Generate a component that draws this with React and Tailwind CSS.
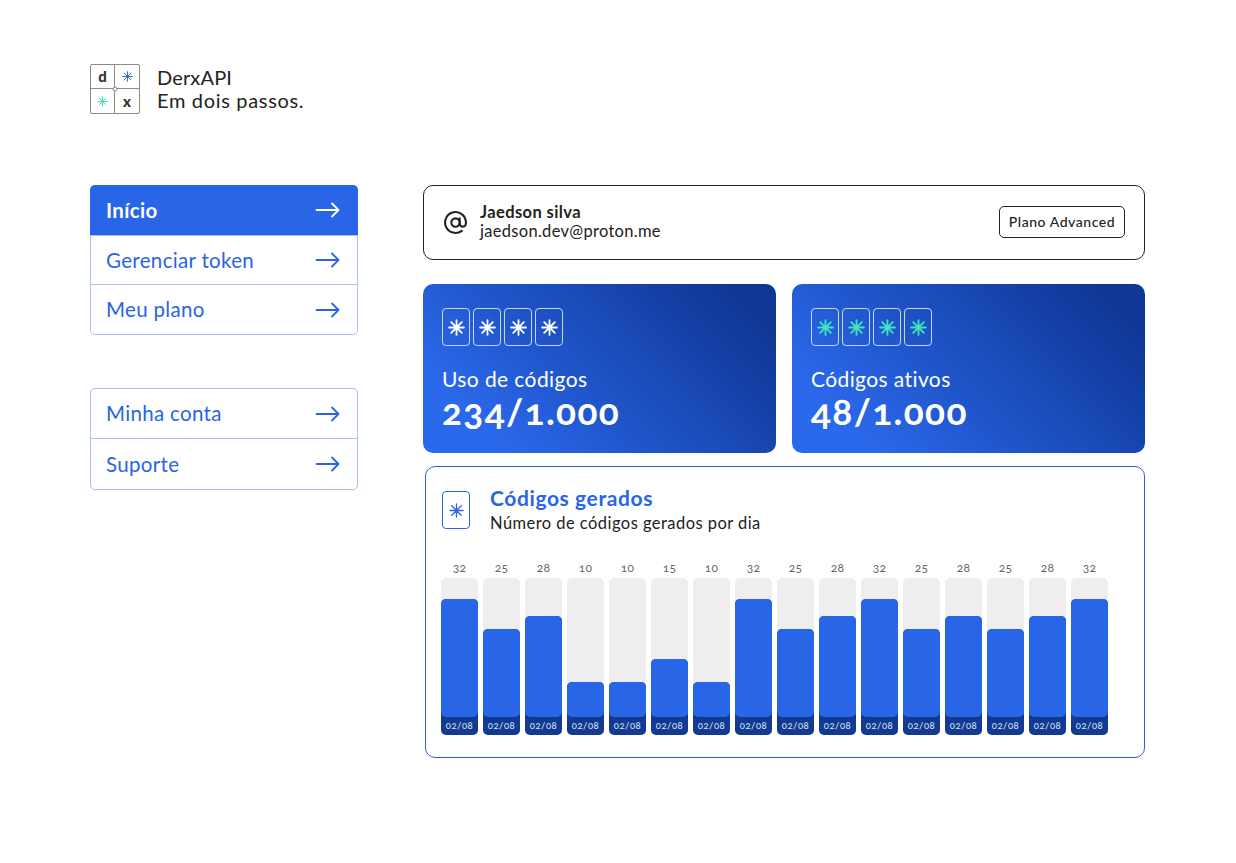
import { AtSign } from 'lucide-react'

const FONT = "font-['Lato','Noto_Sans',sans-serif]"

const MENU_TOP = [
  { name: 'Início', active: true, height: 'h-[51px]' },
  { name: 'Gerenciar token', height: 'h-[49px]' },
  { name: 'Meu plano', height: 'h-[49px]' },
]
const MENU_BOTTOM = [
  { name: 'Minha conta', height: 'h-[50px]' },
  { name: 'Suporte', height: 'h-[50px]' },
]
const BARS = [32, 25, 28, 10, 10, 15, 10, 32, 25, 28, 32, 25, 28, 25, 28, 32]
const HEIGHTS = { 32: 136, 25: 106, 28: 119, 10: 53, 15: 76 }

function Star({ size = 16, className = '', width = 1.4 }) {
  return (
    <svg width={size} height={size} viewBox="0 0 16 16" className={className} stroke="currentColor" strokeWidth={width} strokeLinecap="round">
      <path d="M8 1v14M1 8h14M3 3l10 10M13 3L3 13" />
    </svg>
  )
}

function Arrow() {
  return (
    <svg width="25" height="16" viewBox="0 0 25 16" fill="none" stroke="currentColor" strokeWidth="1.8" strokeLinecap="round" strokeLinejoin="round">
      <path d="M1.5 8h22M17 1.5L23.5 8 17 14.5" />
    </svg>
  )
}

function Logo() {
  return (
    <div className="relative grid h-[50px] w-[50px] grid-cols-2 grid-rows-2 rounded-[2px] border border-[#8a8a8a] text-[15px] font-black text-[#333]">
      <div className="flex items-center justify-center border-r border-b border-[#8a8a8a]">d</div>
      <div className="flex items-center justify-center border-b border-[#8a8a8a] text-[#2865e7]"><Star size={11} width={1.4} /></div>
      <div className="flex items-center justify-center border-r border-[#8a8a8a] text-[#3fe6bd]"><Star size={11} width={1.4} /></div>
      <div className="flex items-center justify-center">x</div>
      <div className="absolute left-1/2 top-1/2 h-[5px] w-[5px] -translate-x-1/2 -translate-y-1/2 rounded-full border border-[#8a8a8a] bg-white" />
    </div>
  )
}

function Menu({ items }) {
  return (
    <nav className="flex flex-col divide-y divide-[#a9c0ec] rounded-[5px] border border-[#a9c0ec]">
      {items.map((item) => (
        <a
          key={item.name}
          className={`flex items-center justify-between text-[20.5px] tracking-[0.33px] ${item.height} ${
            item.active
              ? '-mx-px -mt-px rounded-t-[5px] bg-[#2865e7] pl-4 pr-[18px] font-bold text-white'
              : 'bg-white pl-[15px] pr-[17px] text-[#2865e7] first:rounded-t-[5px] last:rounded-b-[5px]'
          }`}
        >
          {item.name}
          <Arrow />
        </a>
      ))}
    </nav>
  )
}

function StatCard({ title, value, starClass }) {
  return (
    <div className="flex h-[169px] flex-1 flex-col rounded-[10px] bg-linear-45 from-[#2b69ec] from-15% to-[#0f3796] to-90% px-[19px] pt-6 text-white">
      <div className="flex gap-[3px]">
        {[0, 1, 2, 3].map((i) => (
          <div key={i} className="flex h-[38px] w-[28px] items-center justify-center rounded-[4px] border border-[#c5d6f7]">
            <Star size={17} width={1.7} className={starClass} />
          </div>
        ))}
      </div>
      <p className="mt-[21px] text-[21px] leading-6 tracking-[0.4px]">{title}</p>
      <p className="text-[37px] font-bold leading-10 tracking-[1.35px] oldstyle-nums">{value}</p>
    </div>
  )
}

function Chart() {
  return (
    <section className="ml-[2px] mt-[13px] h-[292px] rounded-[10px] border border-[#2f62c4] pl-[15px] pt-[24px]">
      <div className="flex items-start">
        <div className="ml-px flex h-[38px] w-[28px] items-center justify-center rounded-[4px] border border-[#2865e7] text-[#2865e7]">
          <Star size={15} width={1.4} />
        </div>
        <div className="ml-[20px] -mt-[5px]">
          <h2 className="text-[21px] font-bold leading-6 tracking-[0.6px] text-[#2865e7]">Códigos gerados</h2>
          <p className="mt-[3px] text-[16.5px] leading-5 tracking-[0.45px] text-[#222]">Número de códigos gerados por dia</p>
        </div>
      </div>
      <div className="mt-[27px] flex gap-[5px]">
        {BARS.map((v, i) => (
          <div key={i} className="flex w-[37px] flex-col items-center">
            <span className="mb-[2px] text-[12px] leading-[16px] tracking-[0.3px] text-[#666] oldstyle-nums">{v}</span>
            <div className="flex h-[157px] w-full flex-col justify-end overflow-hidden rounded-[5px] bg-[#eeeeee]">
              <div className="flex flex-col justify-end rounded-t-[5px] bg-[#123a93]" style={{ height: HEIGHTS[v] }}>
                <div className="flex-1 rounded-[5px] bg-[#2865e7]" />
                <span className="h-[18px] text-center text-[9.5px] leading-[18px] tracking-[0.5px] text-[#dfe8fb] oldstyle-nums">02/08</span>
              </div>
            </div>
          </div>
        ))}
      </div>
    </section>
  )
}

export default function App() {
  return (
    <div className={`min-h-[863px] bg-white pl-[90px] pr-[91px] pt-[64px] text-[#222] ${FONT}`}>
      <header className="flex items-center gap-[17px]">
        <Logo />
        <div className="text-[20px] leading-[23px] text-[#222]">
          <p className="tracking-[0.15px]">DerxAPI</p>
          <p className="tracking-[0.67px]">Em dois passos.</p>
        </div>
      </header>

      <div className="mt-[71px] flex gap-[65px]">
        <aside className="flex w-[268px] shrink-0 flex-col gap-[53px]">
          <Menu items={MENU_TOP} />
          <Menu items={MENU_BOTTOM} />
        </aside>

        <main className="flex-1">
          <div className="flex h-[75px] items-center justify-between rounded-[10px] border border-[#222] pl-[19px] pr-[19px]">
            <div className="flex items-center gap-[12px]">
              <AtSign size={25} strokeWidth={2} className="text-[#222]" />
              <div className="-mt-[4px]">
                <p className="text-[16.5px] font-bold leading-5 tracking-[0.4px]">Jaedson silva</p>
                <p className="text-[16.5px] leading-[18px] tracking-[0.3px]">jaedson.dev@proton.me</p>
              </div>
            </div>
            <span className="mb-[2px] flex h-[32px] w-[126px] items-center justify-center rounded-[5px] border border-[#222] text-[14px] font-medium tracking-[0.55px]">Plano Advanced</span>
          </div>

          <div className="mt-6 flex gap-4">
            <StatCard title="Uso de códigos" value="234/1.000" starClass="text-white" />
            <StatCard title="Códigos ativos" value="48/1.000" starClass="text-[#3fe6bd]" />
          </div>

          <Chart />
        </main>
      </div>
    </div>
  )
}
